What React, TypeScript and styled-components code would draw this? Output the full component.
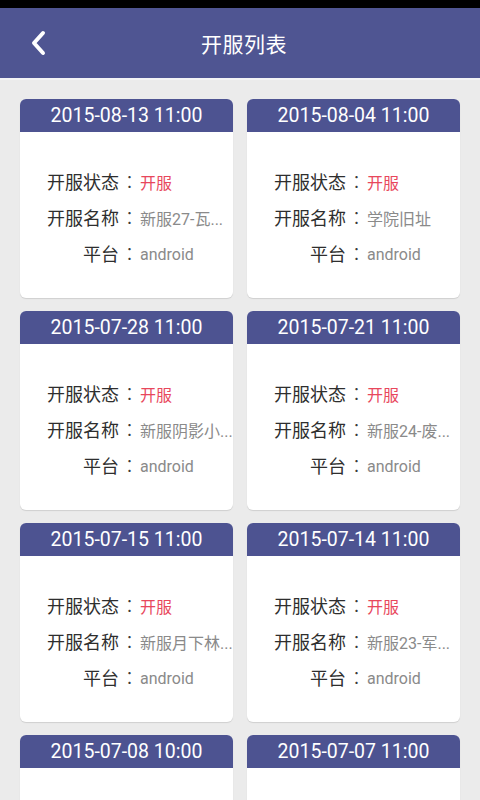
import React from 'react';
import styled, { createGlobalStyle } from 'styled-components';

interface Server {
    date: string;
    name: string;
    platform: string;
}

// names are shown already shortened, as the list cell does
const servers: Server[] = [
    { date: '2015-08-13 11:00', name: '新服27-瓦...', platform: 'android' },
    { date: '2015-08-04 11:00', name: '学院旧址', platform: 'android' },
    { date: '2015-07-28 11:00', name: '新服阴影小...', platform: 'android' },
    { date: '2015-07-21 11:00', name: '新服24-废...', platform: 'android' },
    { date: '2015-07-15 11:00', name: '新服月下林...', platform: 'android' },
    { date: '2015-07-14 11:00', name: '新服23-军...', platform: 'android' },
    { date: '2015-07-08 10:00', name: '新服22-古...', platform: 'android' },
    { date: '2015-07-07 11:00', name: '新服21-荒...', platform: 'android' },
];

const GlobalStyle = createGlobalStyle`
    html, body {
        margin: 0;
        padding: 0;
        background: #ebebeb;
    }
    body {
        width: 480px;
        height: 800px;
        overflow: hidden;
        font-family: Roboto, "Noto Sans CJK SC", sans-serif;
    }
`;

const Screen = styled.div`
    width: 480px;
    height: 800px;
    overflow: hidden;
    display: flex;
    flex-direction: column;
    background: #ebebeb;
`;

const StatusBar = styled.div`
    height: 8px;
    background: #000;
    flex-shrink: 0;
`;

const Header = styled.div`
    height: 70px;
    background: #4f5592;
    border-bottom: 2px solid #f4f4f6;
    display: flex;
    align-items: center;
    justify-content: center;
    position: relative;
    flex-shrink: 0;
`;

const BackButton = styled.div`
    position: absolute;
    left: 27px;
    top: 21px;
    width: 22px;
    height: 28px;
    display: flex;
    align-items: center;
    justify-content: center;
`;

const Title = styled.div`
    color: #fff;
    font-size: 21px;
    font-family: "Noto Sans CJK SC", sans-serif;
    letter-spacing: 0.5px;
    padding-left: 8px;
`;

const Grid = styled.div`
    display: grid;
    grid-template-columns: 213px 213px;
    column-gap: 14px;
    row-gap: 13px;
    padding: 19px 20px;
`;

const Card = styled.div`
    height: 199px;
    background: #fff;
    border-radius: 6px;
    overflow: hidden;
    box-shadow: 0 1px 1px rgba(0, 0, 0, 0.12);
    display: flex;
    flex-direction: column;
`;

const CardHead = styled.div`
    height: 33px;
    background: #4d5391;
    color: #fff;
    font-size: 19.5px;
    display: flex;
    align-items: center;
    justify-content: center;
    flex-shrink: 0;
`;

const CardBody = styled.div`
    flex: 1;
    display: flex;
    flex-direction: column;
    justify-content: center;
    gap: 10px;
    padding: 4px 4px 0 27px;
`;

const Row = styled.div`
    display: flex;
    align-items: center;
    height: 26px;
`;

const Label = styled.span`
    width: 72px;
    text-align: right;
    font-size: 18px;
    color: #2e2e2e;
    font-family: "Noto Sans CJK SC", sans-serif;
    white-space: nowrap;
`;

const Colon = styled.span`
    width: 21px;
    font-size: 18px;
    color: #3a3a3a;
    font-family: "Noto Sans CJK TC", sans-serif;
    font-weight: 300;
    text-align: center;
`;

const Value = styled.span<{ $red?: boolean }>`
    flex: 1;
    min-width: 0;
    font-size: 16px;
    color: ${(p) => (p.$red ? '#e8475c' : '#8a8a8a')};
    font-family: Roboto, "Noto Sans CJK SC", sans-serif;
    white-space: nowrap;
    padding-top: 2px;
`;

const ServerCard = ({ server }: { server: Server }) => (
    <Card>
        <CardHead>{server.date}</CardHead>
        <CardBody>
            <Row>
                <Label>开服状态</Label>
                <Colon>：</Colon>
                <Value $red>开服</Value>
            </Row>
            <Row>
                <Label>开服名称</Label>
                <Colon>：</Colon>
                <Value>{server.name}</Value>
            </Row>
            <Row>
                <Label>平台</Label>
                <Colon>：</Colon>
                <Value>{server.platform}</Value>
            </Row>
        </CardBody>
    </Card>
);

const App = () => (
    <Screen>
        <GlobalStyle />
        <StatusBar />
        <Header>
            <BackButton>
                <svg width="16" height="26" viewBox="0 0 16 26">
                    <path
                        d="M13 3 L4 13 L13 23"
                        fill="none"
                        stroke="#fff"
                        strokeWidth="4"
                        strokeLinecap="round"
                        strokeLinejoin="round"
                    />
                </svg>
            </BackButton>
            <Title>开服列表</Title>
        </Header>
        <Grid>
            {servers.map((s) => (
                <ServerCard key={s.date} server={s} />
            ))}
        </Grid>
    </Screen>
);

export default App;
